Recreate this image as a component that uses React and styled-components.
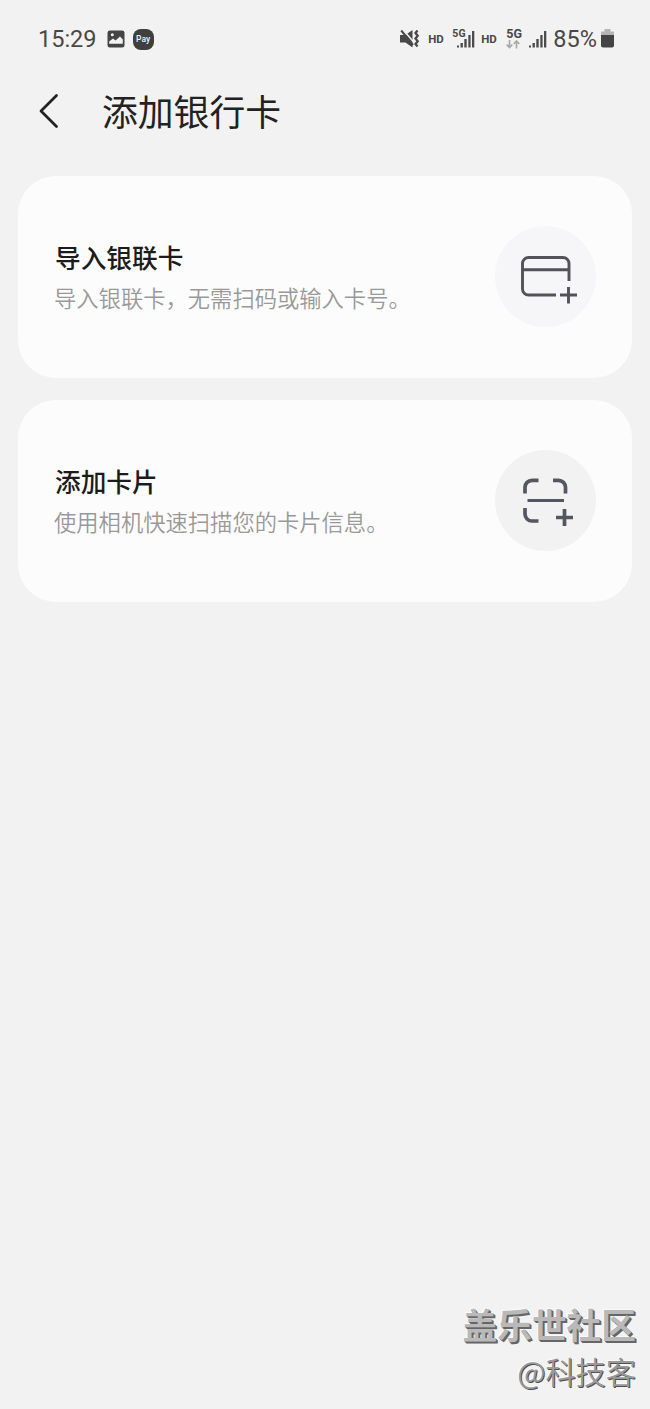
import React from "react";
import styled, { createGlobalStyle } from "styled-components";

const Global = createGlobalStyle`
  * { box-sizing: border-box; }
  body {
    margin: 0;
    background: #f2f2f2;
    font-family: Roboto, "Noto Sans CJK SC", sans-serif;
  }
`;

const Screen = styled.div`
  display: flex;
  flex-direction: column;
  width: 650px;
  height: 1409px;
  background: #f2f2f2;
  overflow: hidden;
`;

const StatusBar = styled.header`
  display: flex;
  justify-content: space-between;
  align-items: flex-start;
  height: 76px;
  padding: 25px 36px 0 38px;
  color: #484848;
`;

const StatusGroup = styled.div`
  display: flex;
  align-items: center;
  height: 28px;
`;

const StatusText = styled.span`
  margin-left: ${(p) => p.$gap || 0}px;
  font-size: 23.5px;
  line-height: 28px;
  white-space: nowrap;
`;

const StatusIcon = styled.svg`
  display: block;
  flex: none;
  margin-left: ${(p) => p.$gap || 0}px;
`;

const PayBadge = styled.span`
  display: flex;
  align-items: center;
  justify-content: center;
  width: 21px;
  height: 21px;
  margin-left: 8px;
  border-radius: 8px;
  background: #3f3f3f;
  color: #f2f2f2;
  font-size: 8.5px;
  font-weight: 500;
  line-height: 10px;
`;

const HdLabel = styled.span`
  width: 16px;
  margin-left: ${(p) => p.$gap}px;
  font-size: 11.5px;
  font-weight: 700;
  line-height: 28px;
  letter-spacing: -0.3px;
`;

const FiveG = styled.span`
  display: block;
  font-size: ${(p) => p.$size}px;
  font-weight: 700;
  line-height: 12px;
  height: 12px;
`;

const Network = styled.div`
  display: flex;
  flex-direction: column;
  width: ${(p) => p.$width}px;
  height: 23px;
  margin-left: ${(p) => p.$gap}px;
`;

const TitleBar = styled.div`
  display: flex;
  align-items: center;
  height: 68px;
  margin-bottom: 32px;
  padding-left: 38px;
`;

const BackButton = styled.button`
  display: flex;
  width: 64px;
  padding: 2px 0 0;
  border: 0;
  background: none;
`;

const Title = styled.h1`
  margin: 0;
  color: #222;
  font: 400 35.8px/52px "Noto Sans CJK SC", sans-serif;
`;

const CardList = styled.main`
  display: flex;
  flex-direction: column;
  gap: 22px;
  padding: 0 18px;
`;

const Card = styled.section`
  display: flex;
  align-items: center;
  justify-content: space-between;
  height: 202px;
  padding: 0 36px 0 37px;
  border-radius: 38px;
  background: #fcfcfc;
`;

const CardText = styled.div`
  display: flex;
  flex-direction: column;
`;

const CardTitle = styled.h2`
  margin: 0;
  color: #1c1c1c;
  font: 500 25.7px/40px "Noto Sans CJK SC", sans-serif;
`;

const CardDescription = styled.p`
  margin: 0 0 0 -1px;
  color: #999;
  font: 350 22.3px/40px "Noto Sans CJK SC", sans-serif;
`;

const IconDisc = styled.div`
  display: flex;
  width: 101px;
  height: 101px;
  margin-bottom: 1px;
  border-radius: 50%;
  background: ${(p) => p.$tone};
`;

const Watermark = styled.footer`
  display: flex;
  flex-direction: column;
  align-items: flex-end;
  margin-top: auto;
  padding: 0 14px 15px 0;
  font-family: "Noto Sans CJK SC", sans-serif;
`;

const Community = styled.span`
  color: #b9b9b9;
  font-size: 34.7px;
  font-weight: 700;
  line-height: 48px;
  text-shadow: 1px 1px 0 #666, 2px 2px 0 #666, -1px -1px 0 #fafafa;
`;

const Author = styled.span`
  color: #999;
  font-size: 30.2px;
  font-weight: 350;
  line-height: 46px;
  text-shadow: 1px 1px 0 #505050, -1px -1px 0 #fafafa;
`;

const PictureIcon = () => (
  <StatusIcon $gap={10} width="18" height="18" viewBox="0 0 18 18">
    <rect x="0.5" y="0.5" width="17" height="17" rx="2.5" fill="#444" />
    <path d="M2.2 13.800V11.500L6 8.500l2.500 2L13 6.500l2.800 3v4.300z" fill="#f2f2f2" />
    <circle cx="5.3" cy="4.8" r="1.5" fill="#f2f2f2" />
  </StatusIcon>
);

const MuteIcon = () => (
  <StatusIcon width="20" height="20" viewBox="0 0 20 20">
    <path d="M0 6h5.500L12.500 1v17.500L5.500 13.500H0z" fill="#484848" />
    <path d="M2.800 .5L14.500 14" stroke="#f2f2f2" strokeWidth="1.600" />
    <path d="M1.200 1.500L13 16" stroke="#484848" strokeWidth="2" />
    <path
      d="M17.500 1.500l-2 2.600 2.200 2.700-2.200 2.700 2.200 2.700-2.200 2.700 2 2.600"
      fill="none"
      stroke="#484848"
      strokeWidth="2.300"
    />
  </StatusIcon>
);

const SignalIcon = ({ gap }) => (
  <StatusIcon $gap={gap} width="18" height="18" viewBox="0 0 18 18" fill="#4c4c4c">
    <rect x="0" y="15.500" width="2" height="2" />
    <rect x="3.500" y="13" width="2.400" height="4.500" />
    <rect x="7.300" y="9" width="2.400" height="8.500" />
    <rect x="11.300" y="5" width="2.300" height="12.500" />
    <rect x="15" y="1" width="2.300" height="16.500" />
  </StatusIcon>
);

const DataArrows = () => (
  <StatusIcon width="14" height="9" viewBox="0 0 14 9">
    <path
      d="M3.500 0v7.500M.7 4.700l2.800 2.800 2.800-2.800M10.500 8.500V1M7.700 3.800L10.500 1l2.800 2.800"
      fill="none"
      stroke="#aaa"
      strokeWidth="1.700"
    />
  </StatusIcon>
);

const BatteryIcon = () => (
  <StatusIcon $gap={4} width="13" height="20" viewBox="0 0 13 20">
    <path d="M3.500 0h6v2.500H13V7H0V2.500h3.500z" fill="#b5b5b5" />
    <path d="M0 6h13v10.500a2 2 0 0 1-2 2H2a2 2 0 0 1-2-2z" fill="#444" />
  </StatusIcon>
);

const AddCardIcon = () => (
  <svg width="101" height="101" viewBox="0 0 101 101" fill="none" stroke="#525258" strokeWidth="2.900">
    <path d="M61 69H33.500a6 6 0 0 1-6-6V37.500a6 6 0 0 1 6-6H68a6 6 0 0 1 6 6V55M27.500 43.700H74" />
    <path d="M65 69h17M73.500 61v16.500" />
  </svg>
);

const ScanCardIcon = () => (
  <svg width="101" height="101" viewBox="0 0 101 101" fill="none" stroke="#535860" strokeWidth="3.700">
    <path d="M43.500 30.300H37a7 7 0 0 0-7 7V43.500M58 30.300h5.500a7 7 0 0 1 7 7V43.500M30 58v6a7 7 0 0 0 7 7h6.500" />
    <path d="M32.500 50.500h36.500" strokeWidth="3" />
    <path d="M61 67.500h17M69.500 59v17" />
  </svg>
);

const options = [
  {
    title: "导入银联卡",
    description: "导入银联卡，无需扫码或输入卡号。",
    tone: "#f6f6f8",
    Icon: AddCardIcon,
  },
  {
    title: "添加卡片",
    description: "使用相机快速扫描您的卡片信息。",
    tone: "#f2f2f3",
    Icon: ScanCardIcon,
  },
];

export default function App() {
  return (
    <Screen>
      <Global />
      <StatusBar>
        <StatusGroup>
          <StatusText>15:29</StatusText>
          <PictureIcon />
          <PayBadge>Pay</PayBadge>
        </StatusGroup>
        <StatusGroup>
          <MuteIcon />
          <HdLabel $gap={8}>HD</HdLabel>
          <Network $gap={8} $width={24}>
            <FiveG $size={10.5}>5G</FiveG>
          </Network>
          <SignalIcon gap={-19} />
          <HdLabel $gap={6}>HD</HdLabel>
          <Network $gap={9} $width={17}>
            <FiveG $size={12.5}>5G</FiveG>
            <DataArrows />
          </Network>
          <SignalIcon gap={6} />
          <StatusText $gap={6}>85%</StatusText>
          <BatteryIcon />
        </StatusGroup>
      </StatusBar>
      <TitleBar>
        <BackButton aria-label="返回">
          <svg width="22" height="36" viewBox="0 0 22 36">
            <path d="M18.500 2.500L3 18l15.500 15.500" fill="none" stroke="#222" strokeWidth="2.800" strokeLinecap="round" strokeLinejoin="round" />
          </svg>
        </BackButton>
        <Title>添加银行卡</Title>
      </TitleBar>
      <CardList>
        {options.map(({ title, description, tone, Icon }) => (
          <Card key={title}>
            <CardText>
              <CardTitle>{title}</CardTitle>
              <CardDescription>{description}</CardDescription>
            </CardText>
            <IconDisc $tone={tone}>
              <Icon />
            </IconDisc>
          </Card>
        ))}
      </CardList>
      <Watermark>
        <Community>盖乐世社区</Community>
        <Author>@科技客</Author>
      </Watermark>
    </Screen>
  );
}
